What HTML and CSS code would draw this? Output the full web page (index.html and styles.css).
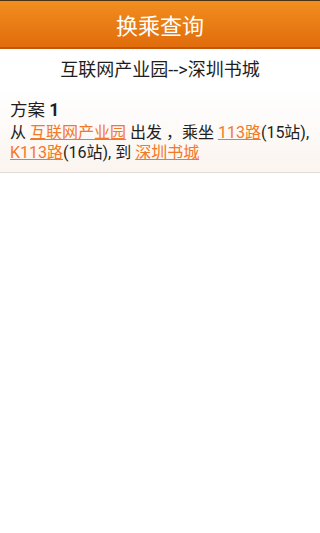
FILE: index.html
```html
<!DOCTYPE html>
<html>
<head>
<meta charset="utf-8">
<link rel="stylesheet" href="styles.css">
</head>
<body>
<div class="header">换乘查询</div>
<div class="route">互联网产业园--&gt;深圳书城</div>
<div class="plan">
  <div class="plan-title">方案 <b>1</b></div>
  <div class="plan-desc">从 <a href="#">互联网产业园</a> 出发 ，乘坐 <a href="#">113路</a>(15站), <a href="#">K113路</a>(16站), 到 <a href="#">深圳书城</a></div>
</div>
</body>
</html>
```

FILE: styles.css
```css
html, body {
  margin: 0;
  padding: 0;
  background: #ffffff;
  font-family: "Roboto", "Noto Sans CJK SC", "Noto Sans", sans-serif;
  color: #1e1e1e;
}
.header {
  height: 46px;
  border-top: 1px solid #4a3314;
  border-bottom: 2px solid #c4560a;
  background: linear-gradient(#f28e1f, #e06c0c);
  color: #ffffff;
  font-family: "Noto Sans CJK SC", sans-serif;
  font-size: 22px;
  line-height: 46px;
  text-align: center;
}
.route {
  height: 41px;
  line-height: 42px;
  text-align: center;
  font-size: 18px;
  color: #1e1e1e;
}
.plan {
  padding: 8px 10px 9px 10px;
  background: linear-gradient(#ffffff, #fbf4ef);
  border-bottom: 1px solid #e2dcd8;
}
.plan-title {
  font-size: 17.5px;
  line-height: 25px;
}
.plan-title b {
  font-weight: 700;
}
.plan-desc {
  font-size: 16px;
  line-height: 20px;
}
.plan-desc a {
  color: #f2782a;
  text-decoration: underline;
}
```
